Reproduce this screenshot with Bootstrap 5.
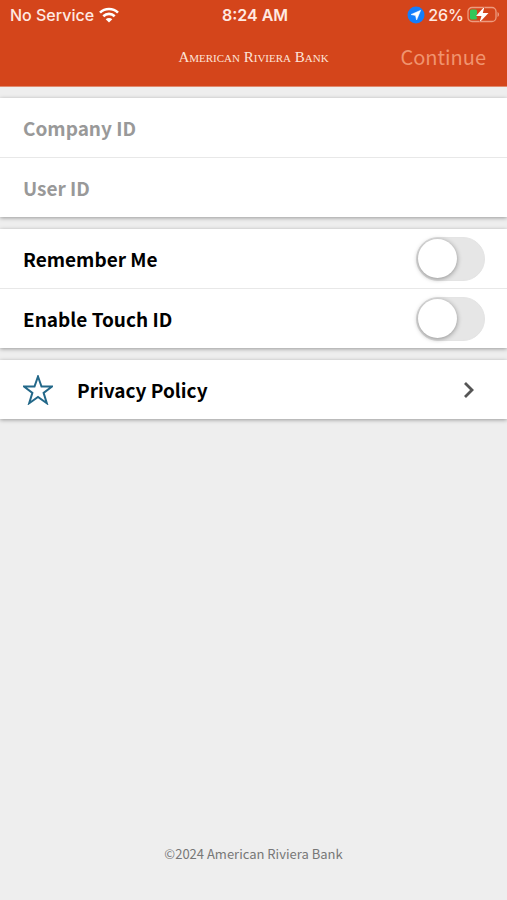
<!DOCTYPE html>
<html lang="en">
<head>
<meta charset="utf-8">
<meta name="viewport" content="width=device-width, initial-scale=1">
<title>American Riviera Bank</title>
<link href="https://cdn.jsdelivr.net/npm/bootstrap@5.3.0/dist/css/bootstrap.min.css" rel="stylesheet">
<style>
  body { background: #eee; color: #000; font-family: "Noto Sans CJK SC", "Open Sans", sans-serif; }
  .app-header { background: #d4451b; color: #fff; border-bottom: 1px solid #e08a6e; }
  .status-bar { height: 30px; padding: 0 7px 0 10px; font: 500 16px/30px Inter, sans-serif; color: #ffe9e2; }
  .status-bar > div { flex: 1 1 0; }
  .status-bar .signal { gap: 5px; }
  .status-bar .power { gap: 3px; }
  .status-bar .clock { font-weight: 600; }
  .title-bar { height: 56px; padding: 0 21px 2px; }
  .title-bar > div { flex: 1 1 0; }
  .bank-name { font: 15px/20px "Liberation Serif", serif; font-variant: small-caps; color: #fde3d8; }
  .btn-continue, .btn-continue:disabled { font-size: 20px; line-height: 30px; color: #f0946f; opacity: 1; border: 0; }
  .app-main { padding-top: 11px; }
  .app-main, .app-main form { gap: 12px; }
  .panel { background: #fff; box-shadow: 0 1px 4px rgba(0, 0, 0, .36); }
  .panel-row { box-sizing: content-box; height: 59px; padding: 0 22px 0 23px; font-size: 19px; line-height: 30px; font-weight: 700; }
  .panel-row + .panel-row { border-top: 1px solid #e8e8e8; }
  .field { font: inherit; height: 59px; color: #000; }
  .field::placeholder { color: #999; opacity: 1; }
  .toggle.form-check-input { width: 69px; height: 44px; margin: 0; border: 1px solid #e4e4e4; border-radius: 22px; background: #e6e6e6; }
  .toggle::before { content: ""; display: block; width: 39px; height: 39px; margin: 1px; border-radius: 50%; background: #fff; box-shadow: 0 1px 5px rgba(0, 0, 0, .4); transition: margin .2s; }
  .toggle:checked { background: #d4451b; }
  .toggle:checked::before { margin-left: 27px; }
  .copyright { font-size: 13px; line-height: 20px; color: #777; padding-bottom: 36px; }
</style>
<script defer src="https://cdn.jsdelivr.net/npm/bootstrap@5.3.0/dist/js/bootstrap.bundle.min.js"></script>
</head>
<body class="d-flex flex-column min-vh-100">
<header class="app-header">
  <div class="status-bar d-flex align-items-center text-nowrap">
    <div class="signal d-flex align-items-center">
      <span>No Service</span>
      <svg width="20" height="16" viewBox="0 0 20 16" fill="none" stroke="#fff" stroke-width="2.6" aria-hidden="true"><path d="M1 5.600C6 .7 14 .7 19 5.600M4.300 9.200c3.200-3.100 8.200-3.100 11.400 0"/><path d="M10 15.500 6.700 12.200c1.800-1.700 4.800-1.700 6.600 0z" fill="#fff" stroke="none"/></svg>
    </div>
    <span class="clock">8:24 AM</span>
    <div class="power d-flex align-items-center justify-content-end">
      <svg width="18" height="18" viewBox="0 0 18 18" aria-hidden="true"><circle cx="9" cy="9" r="8.500" fill="#147efb"/><path d="M13.700 4.300 9.600 14 8.500 9.600 4 8.500z" fill="#fff" stroke="#fff" stroke-width=".5"/></svg>
      <span>26%</span>
      <svg width="33" height="18" viewBox="0 0 33 18" aria-hidden="true"><rect x="1" y="1.500" width="28" height="14" rx="4" fill="none" stroke="#ed9b7f" stroke-width="1.300"/><path d="M30.500 6c2 .8 2 4.200 0 5z" fill="#ed9b7f"/><rect x="3" y="3.500" width="7" height="10" rx="1.500" fill="#34c759"/><path d="M17.500 .5 9 10h5.500L12.500 16.500 21.500 7h-5.700z" fill="#fff" stroke="#d4451b" stroke-width="1" paint-order="stroke"/></svg>
    </div>
  </div>
  <div class="title-bar d-flex align-items-center text-nowrap">
    <div></div>
    <span class="bank-name">American Riviera Bank</span>
    <div class="text-end"><button type="button" class="btn btn-continue p-0" disabled>Continue</button></div>
  </div>
</header>
<main class="app-main d-flex flex-column flex-grow-1">
  <form class="d-flex flex-column">
    <section class="panel">
      <div class="panel-row"><input class="field form-control-plaintext p-0" type="text" placeholder="Company ID" aria-label="Company ID"></div>
      <div class="panel-row"><input class="field form-control-plaintext p-0" type="text" placeholder="User ID" aria-label="User ID"></div>
    </section>
    <section class="panel">
      <div class="panel-row d-flex align-items-center justify-content-between"><label for="remember">Remember Me</label><input class="toggle form-check-input" type="checkbox" role="switch" id="remember"></div>
      <div class="panel-row d-flex align-items-center justify-content-between"><label for="touch">Enable Touch ID</label><input class="toggle form-check-input" type="checkbox" role="switch" id="touch"></div>
    </section>
  </form>
  <nav class="panel">
    <a href="#privacy" class="panel-row d-flex align-items-center text-decoration-none text-black">
      <svg class="me-4" width="30" height="30" viewBox="1 1 30 30" fill="none" stroke="#236889" stroke-width="2" aria-hidden="true"><path d="M16 2.500 19.500 12.500H30L21.600 18.900 24.800 29.200 16 23 7.200 29.200 10.400 18.900 2 12.500H12.500z"/></svg>
      <span>Privacy Policy</span>
      <svg class="ms-auto me-2" width="14" height="18" viewBox="0 0 14 18" fill="none" stroke="#555" stroke-width="2.800" aria-hidden="true"><path d="m2 2 7 7-7 7"/></svg>
    </a>
  </nav>
</main>
<footer class="copyright text-center">©2024 American Riviera Bank</footer>
</body>
</html>
